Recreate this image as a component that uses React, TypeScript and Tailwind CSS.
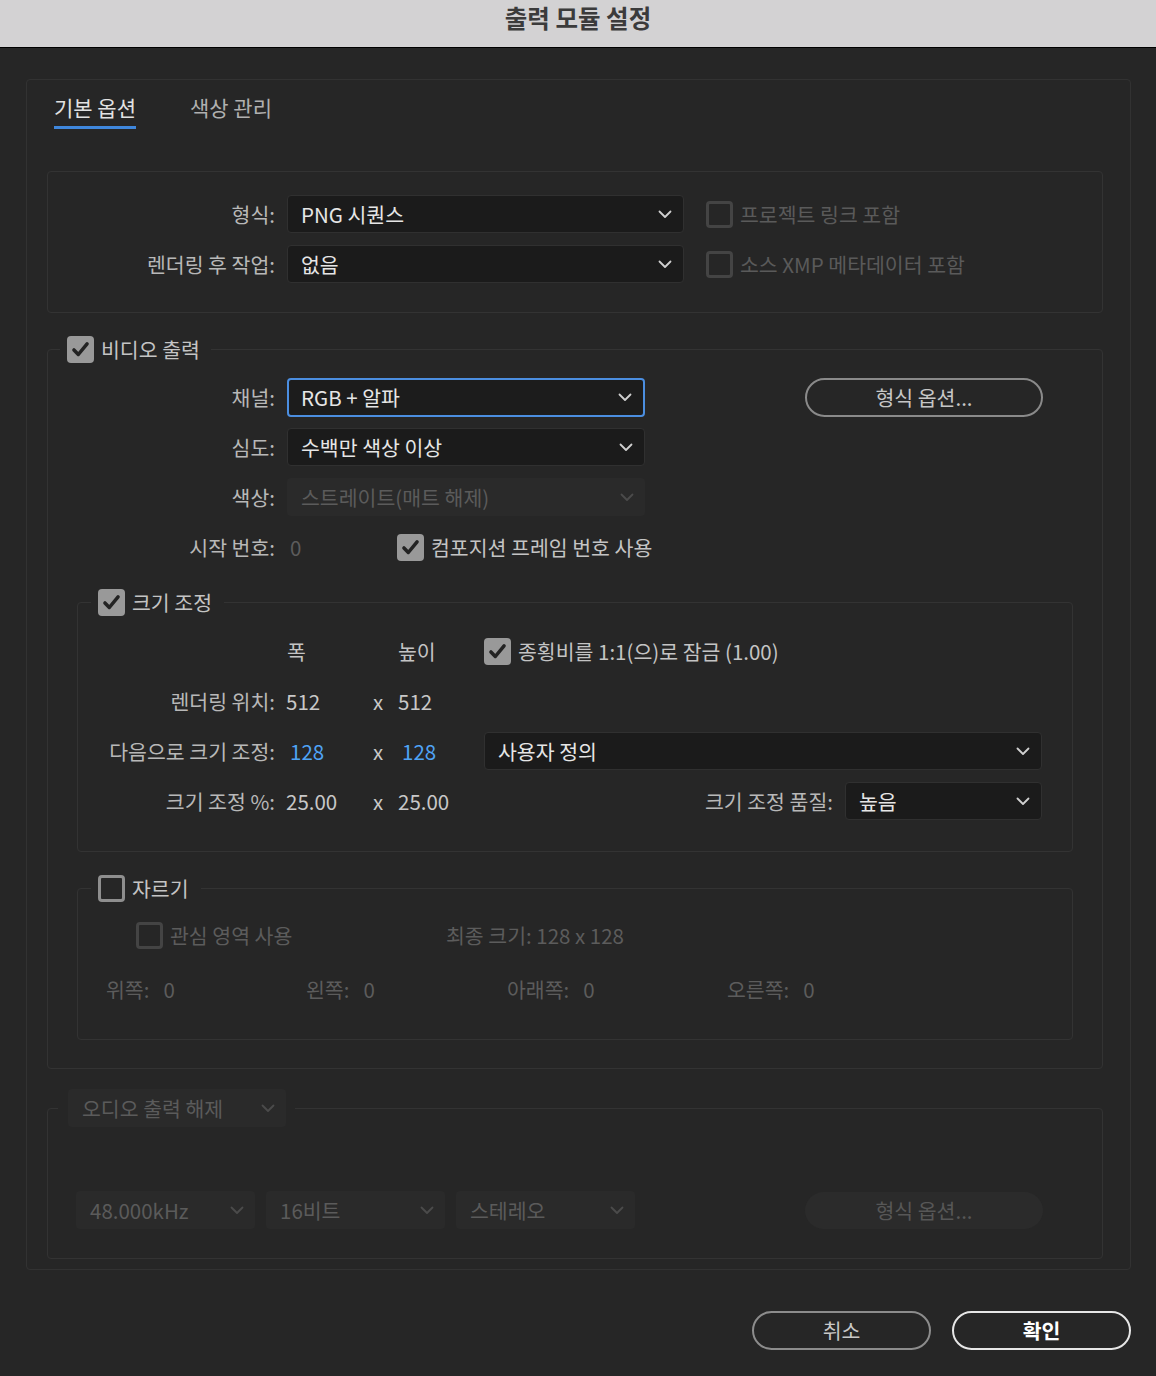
import React from 'react'
import clsx from 'clsx'

const Chevron = ({ color = '#cfcfcf' }: { color?: string }) => (
  <svg width="14" height="9" viewBox="0 0 14 9" fill="none">
    <path d="M1.5 1.5 7 7l5.5-5.5" stroke={color} strokeWidth="1.8" strokeLinecap="round" strokeLinejoin="round" />
  </svg>
)

interface SelectProps {
  value: string
  className?: string
  focused?: boolean
  disabled?: boolean
}

const Select = ({ value, className = '', focused = false, disabled = false }: SelectProps) => (
  <div
    className={clsx(
      'flex items-center justify-between rounded-[4px] h-[38px] pr-[11px]',
      focused
        ? 'border-2 border-[#4b8ee0] bg-[#1c1c1c] pl-[12px]'
        : disabled
          ? 'bg-[#2a2a2a] pl-[14px]'
          : 'border border-[#303030] bg-[#1b1b1b] pl-[13px]',
      className
    )}
  >
    <span className={disabled ? 'text-[#5b5b5b]' : 'text-[#e6e6e6]'}>{value}</span>
    <Chevron color={disabled ? '#4b4b4b' : '#d0d0d0'} />
  </div>
)

const Checkbox = ({ checked = false, disabled = false }: { checked?: boolean; disabled?: boolean }) =>
  checked ? (
    <span className="flex w-[27px] h-[27px] shrink-0 items-center justify-center rounded-[4px] bg-[#999999]">
      <svg width="21" height="21" viewBox="0 0 24 24" fill="none">
        <path d="M4.5 12.5l5 5.2L19.5 5.5" stroke="#232323" strokeWidth="4" strokeLinecap="round" strokeLinejoin="round" />
      </svg>
    </span>
  ) : (
    <span
      className={clsx(
        'block w-[27px] h-[27px] shrink-0 rounded-[4px] border-[3px]',
        disabled ? 'border-[#444444]' : 'border-[#8e8e8e]'
      )}
    />
  )

const Label = ({ children, className = '' }: { children: React.ReactNode; className?: string }) => (
  <span className={clsx('text-right text-[#b8b8b8] shrink-0 whitespace-nowrap', className)}>{children}</span>
)

const App = () => {
  return (
    <div className="w-[1156px] h-[1376px] bg-[#262626] font-['Noto_Sans_CJK_KR','Noto_Sans',sans-serif] text-[20.5px] text-[#b8b8b8] overflow-hidden">
      {/* title bar */}
      <div className="h-[48px] bg-[#d3d2d3] border-b border-black flex justify-center">
        <span className="text-[24.5px] font-bold text-[#3b3b3b] leading-[36px]">출력 모듈 설정</span>
      </div>

      {/* main panel */}
      <div className="ml-[26px] mt-[31px] w-[1105px] border border-[#323232] rounded-[4px] pb-[10px]">
        {/* tabs */}
        <div className="flex pl-[27px] pt-[13px] gap-[54px]">
          <div className="flex flex-col">
            <span className="leading-[28px] text-[21px] text-[#e2e2e2]">기본 옵션</span>
            <span className="mt-[5px] h-[3px] bg-[#3f87dc]" />
          </div>
          <span className="leading-[28px] text-[21px] text-[#b0b0b0]">색상 관리</span>
        </div>

        <div className="pl-[20px]">
          {/* format group */}
          <div className="mt-[42px] w-[1056px] h-[142px] border border-[#333333] rounded-[4px] pt-[23px] flex flex-col gap-[12px]">
            <div className="flex items-center h-[38px]">
              <Label className="w-[227px]">형식:</Label>
              <Select value="PNG 시퀀스" className="ml-[12px] w-[397px]" />
              <span className="ml-[22px] flex items-center gap-[7px] text-[#5a5a5a]">
                <Checkbox disabled />
                프로젝트 링크 포함
              </span>
            </div>
            <div className="flex items-center h-[38px]">
              <Label className="w-[227px]">렌더링 후 작업:</Label>
              <Select value="없음" className="ml-[12px] w-[397px]" />
              <span className="ml-[22px] flex items-center gap-[7px] text-[#5a5a5a]">
                <Checkbox disabled />
                소스 XMP 메타데이터 포함
              </span>
            </div>
          </div>

          {/* video output */}
          <fieldset className="mt-[21px] w-[1056px] border border-[#333333] rounded-[4px] pb-[28px]">
            <legend className="ml-[12px] pl-[7px] pr-[11px]">
              <span className="flex items-center gap-[7px] text-[#c4c4c4] h-[30px]">
                <Checkbox checked />
                비디오 출력
              </span>
            </legend>

            <div className="mt-[14px] flex flex-col gap-[12px]">
              <div className="flex items-center h-[38px]">
                <Label className="w-[227px]">채널:</Label>
                <Select value="RGB + 알파" focused className="ml-[12px] w-[358px] h-[39px]" />
                <button className="ml-[160px] w-[238px] h-[39px] rounded-full border-2 border-[#8a8a8a] text-[#c6c6c6]">
                  형식 옵션...
                </button>
              </div>
              <div className="flex items-center h-[38px]">
                <Label className="w-[227px]">심도:</Label>
                <Select value="수백만 색상 이상" className="ml-[12px] w-[358px]" />
              </div>
              <div className="flex items-center h-[38px]">
                <Label className="w-[227px]">색상:</Label>
                <Select value="스트레이트(매트 해제)" disabled className="ml-[12px] w-[358px]" />
              </div>
              <div className="flex items-center h-[38px]">
                <Label className="w-[227px]">시작 번호:</Label>
                <span className="w-[122px] pl-[15px] text-[#5c5c5c]">0</span>
                <span className="flex items-center gap-[7px] text-[#c4c4c4]">
                  <Checkbox checked />
                  컴포지션 프레임 번호 사용
                </span>
              </div>
            </div>

            {/* resize */}
            <fieldset className="mt-[21px] ml-[29px] w-[996px] border border-[#333333] rounded-[4px] pb-[31px]">
              <legend className="ml-[13px] pl-[7px] pr-[12px]">
                <span className="flex items-center gap-[7px] text-[#c4c4c4] h-[30px]">
                  <Checkbox checked />
                  크기 조정
                </span>
              </legend>
              <div className="mt-[15px] flex flex-col gap-[12px]">
                <div className="flex items-center h-[38px]">
                  <span className="w-[197px]" />
                  <span className="ml-[12px] w-[86px] text-[#c4c4c4]">폭</span>
                  <span className="w-[25px]" />
                  <span className="w-[86px] text-[#c4c4c4]">높이</span>
                  <span className="flex items-center gap-[7px] text-[#c4c4c4]">
                    <Checkbox checked />
                    종횡비를 1:1(으)로 잠금 (1.00)
                  </span>
                </div>
                <div className="flex items-center h-[38px]">
                  <Label className="w-[197px]">렌더링 위치:</Label>
                  <span className="ml-[11px] w-[87px] text-[#c8c8c8]">512</span>
                  <span className="w-[25px] text-[#c8c8c8]">x</span>
                  <span className="w-[86px] text-[#c8c8c8]">512</span>
                </div>
                <div className="flex items-center h-[38px]">
                  <Label className="w-[197px]">다음으로 크기 조정:</Label>
                  <span className="ml-[15px] w-[83px] text-[#4fa3f5]">128</span>
                  <span className="w-[29px] text-[#c8c8c8]">x</span>
                  <span className="w-[82px] text-[#4fa3f5]">128</span>
                  <Select value="사용자 정의" className="w-[558px]" />
                </div>
                <div className="flex items-center h-[38px]">
                  <Label className="w-[197px]">크기 조정 %:</Label>
                  <span className="ml-[11px] w-[87px] text-[#c8c8c8]">25.00</span>
                  <span className="w-[25px] text-[#c8c8c8]">x</span>
                  <span className="w-[86px] text-[#c8c8c8]">25.00</span>
                  <div className="flex flex-1 items-center justify-end pr-[30px]">
                    <Label>크기 조정 품질:</Label>
                    <Select value="높음" className="ml-[12px] w-[197px]" />
                  </div>
                </div>
              </div>
            </fieldset>

            {/* crop */}
            <fieldset className="mt-[21px] ml-[29px] w-[996px] border border-[#333333] rounded-[4px] pb-[31px]">
              <legend className="ml-[13px] pl-[7px] pr-[12px]">
                <span className="flex items-center gap-[7px] text-[#c4c4c4] h-[30px]">
                  <Checkbox />
                  자르기
                </span>
              </legend>
              <div className="mt-[13px] flex flex-col gap-[16px] text-[#5c5c5c]">
                <div className="flex items-center h-[38px]">
                  <span className="w-[368px] pl-[58px] flex items-center gap-[7px]">
                    <Checkbox disabled />
                    관심 영역 사용
                  </span>
                  <span>최종 크기: 128 x 128</span>
                </div>
                <div className="flex items-center h-[38px] pl-[28px]">
                  <span className="w-[200px]">위쪽:<span className="ml-[14px]">0</span></span>
                  <span className="w-[201px]">왼쪽:<span className="ml-[14px]">0</span></span>
                  <span className="w-[220px]">아래쪽:<span className="ml-[14px]">0</span></span>
                  <span>오른쪽:<span className="ml-[14px]">0</span></span>
                </div>
              </div>
            </fieldset>
          </fieldset>

          {/* audio */}
          <fieldset className="mt-[20px] w-[1056px] border border-[#333333] rounded-[4px] pb-[29px]">
            <legend className="ml-[10px] pl-[10px] pr-[9px]">
              <Select value="오디오 출력 해제" disabled className="w-[218px] h-[37px]" />
            </legend>
            <div className="mt-[64px] flex items-center pl-[28px] gap-[11px]">
              <Select value="48.000kHz" disabled className="w-[179px] h-[37px]" />
              <Select value="16비트" disabled className="w-[179px] h-[37px]" />
              <Select value="스테레오" disabled className="w-[179px] h-[37px]" />
              <button className="ml-[159px] w-[238px] h-[37px] rounded-full bg-[#2b2b2b] text-[#575757]">
                형식 옵션...
              </button>
            </div>
          </fieldset>
        </div>
      </div>

      {/* footer buttons */}
      <div className="mt-[41px] flex justify-end gap-[21px] pr-[25px]">
        <button className="w-[179px] h-[39px] rounded-full border-2 border-[#8c8c8c] text-[#c8c8c8]">취소</button>
        <button className="w-[179px] h-[39px] rounded-full border-2 border-[#e6e6e6] text-white font-bold">확인</button>
      </div>
    </div>
  )
}

export default App
